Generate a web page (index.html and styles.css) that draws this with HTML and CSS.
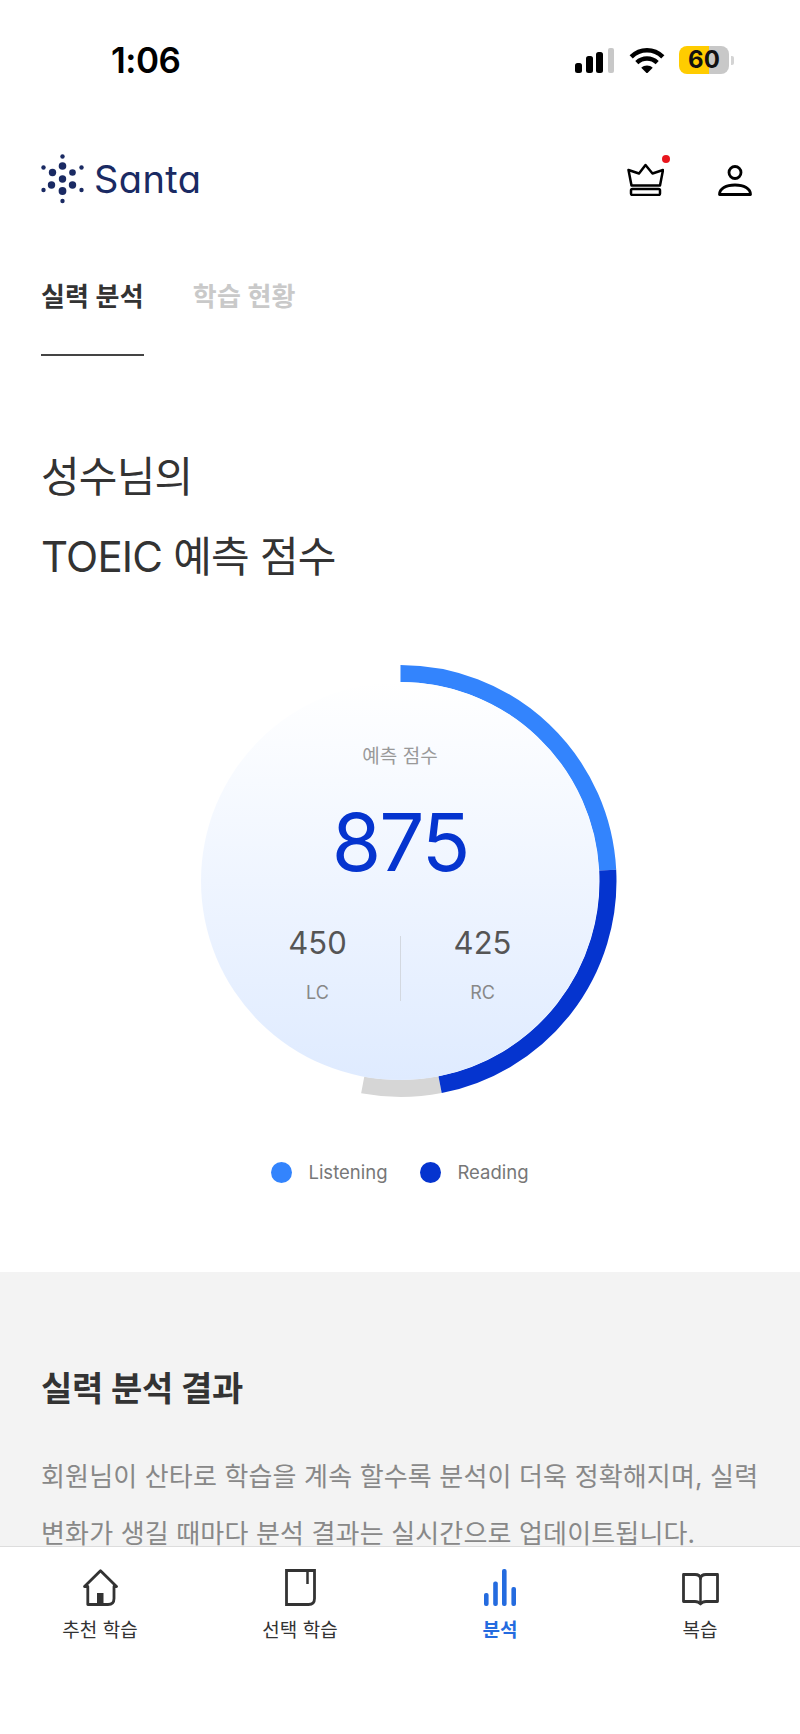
FILE: index.html
```html
<!DOCTYPE html>
<html lang="ko">
<head>
<meta charset="utf-8">
<title>Santa</title>
<link rel="stylesheet" href="styles.css">
</head>
<body>
<div class="app">
  <main class="content">
    <div class="status">
      <span class="time">1:06</span>
      <div class="status-right">
        <svg class="signal" viewBox="0 0 39 25"><rect x="0" y="15" width="7" height="10" rx="2.500" fill="#000"/><rect x="11" y="8" width="7" height="17" rx="2.500" fill="#000"/><rect x="21" y="4" width="7" height="21" rx="2.500" fill="#000"/><rect x="33" y="0" width="6" height="25" rx="2" fill="#c8c8c8"/></svg>
        <svg class="wifi" viewBox="0 0 34 25"><path d="M1.800 9.500C10.500 1 23.500 1 32.200 9.500" fill="none" stroke="#000" stroke-width="4.400"/><path d="M7.200 15C13 9.800 21 9.800 26.800 15" fill="none" stroke="#000" stroke-width="4.400"/><path d="M11.500 20C14.500 17.200 19.500 17.200 22.500 20L17 25.500Z" fill="#000"/></svg>
        <div class="battery"><span class="battery-num">60</span></div>
        <span class="battery-nub"></span>
      </div>
    </div>

    <header class="header">
      <div class="brand">
        <svg class="brand-mark" viewBox="1.800 0 42.400 50">
          <g fill="#1a2a63">
            <circle cx="23" cy="2.500" r="2.200"/><circle cx="23" cy="12" r="3.800"/><circle cx="23" cy="25" r="3.700"/><circle cx="23" cy="37" r="3.900"/><circle cx="23" cy="47" r="2.200"/>
            <circle cx="13" cy="18.500" r="3.700"/><circle cx="33" cy="18.500" r="3.300"/><circle cx="12" cy="31" r="3.700"/><circle cx="33" cy="31" r="3.700"/>
            <circle cx="4" cy="13.500" r="2.200"/><circle cx="42" cy="13.500" r="2.200"/><circle cx="4" cy="36" r="2.200"/><circle cx="42" cy="36" r="2.200"/>
          </g>
        </svg>
        <span class="brand-name">Santa</span>
      </div>
      <div class="header-actions">
        <div class="crown-wrap">
          <svg class="crown" viewBox="0 0 37 33"><path d="M1.500 7L12 10.500L18.500 2L25.500 10.500L36 7L33 22.500H4.500Z" fill="none" stroke="#000" stroke-width="2.500" stroke-linejoin="round"/><rect x="4" y="26" width="29" height="6" rx="1.500" fill="none" stroke="#000" stroke-width="2.500"/></svg>
          <span class="crown-dot"></span>
        </div>
        <svg class="person" viewBox="0 0 34 31"><circle cx="17" cy="7.500" r="6" fill="none" stroke="#000" stroke-width="2.800"/><path d="M1.500 29.500C1.500 23.500 8 20 17 20S32.500 23.500 32.500 29.500Z" fill="none" stroke="#000" stroke-width="2.800" stroke-linejoin="round"/></svg>
      </div>
    </header>

    <nav class="tabs">
      <span class="tab tab-active">실력 분석</span>
      <span class="tab">학습 현황</span>
    </nav>

    <h1 class="title">성수님의<br>TOEIC 예측 점수</h1>

    <section class="chart">
      <svg class="ring" viewBox="0 0 430 430">
        <path d="M177.700 419A207.500 207.500 0 0 0 255.100 418.700" fill="none" stroke="#d6d6d6" stroke-width="17"/>
        <path d="M215.500 7.500A207.500 207.500 0 0 1 422.700 204.100" fill="none" stroke="#3384fd" stroke-width="17"/>
        <path d="M422.700 204.100A207.500 207.500 0 0 1 255.100 418.700" fill="none" stroke="#0534cf" stroke-width="17"/>
      </svg>
      <div class="disc">
        <span class="disc-label">예측 점수</span>
        <span class="disc-score">875</span>
        <div class="split">
          <div class="split-col"><span class="split-num">450</span><span class="split-name">LC</span></div>
          <span class="split-line"></span>
          <div class="split-col"><span class="split-num">425</span><span class="split-name">RC</span></div>
        </div>
      </div>
    </section>

    <div class="legend">
      <span class="legend-item"><i class="dot dot-light"></i>Listening</span>
      <span class="legend-item"><i class="dot dot-dark"></i>Reading</span>
    </div>

    <section class="result">
      <h2 class="result-title">실력 분석 결과</h2>
      <p class="result-text">회원님이 산타로 학습을 계속 할수록 분석이 더욱 정확해지며, 실력 변화가 생길 때마다 분석 결과는 실시간으로 업데이트됩니다.</p>
    </section>
  </main>

  <nav class="bottom-nav">
    <div class="nav-item">
      <svg class="ico ico-home" viewBox="0 0 35 37"><path d="M1.500 17.500L17.500 1.800L33.500 17.500H31V29.500Q31 35.500 25 35.500H4.800V17.500Z" fill="none" stroke="#333" stroke-width="2.800" stroke-linejoin="round"/><rect x="14" y="24" width="6.500" height="11" fill="#333"/></svg>
      <span class="nav-label">추천 학습</span>
    </div>
    <div class="nav-item">
      <svg class="ico ico-note" viewBox="0 0 31 37"><path d="M1.500 1.500H29.500V29.500Q29.500 35.500 23.500 35.500H1.500Z" fill="none" stroke="#333" stroke-width="2.800"/><path d="M22.500 1.500V15" fill="none" stroke="#333" stroke-width="2.500"/></svg>
      <span class="nav-label">선택 학습</span>
    </div>
    <div class="nav-item nav-item-active">
      <svg class="ico ico-bars" viewBox="0 0 32 37"><rect x="0" y="24" width="4.600" height="13" rx="2" fill="#246bdf"/><rect x="9.200" y="12.500" width="4.600" height="24.500" rx="2" fill="#246bdf"/><rect x="18" y="0" width="4.600" height="37" rx="2" fill="#246bdf"/><rect x="27.400" y="18" width="4.600" height="19" rx="2" fill="#246bdf"/></svg>
      <span class="nav-label">분석</span>
    </div>
    <div class="nav-item">
      <svg class="ico ico-open" viewBox="0 0 37 34"><path d="M1.500 2.500H13Q18 2.500 18.500 6.500Q19 2.500 24 2.500H35.500V29.500H24Q20.500 29.500 18.500 32Q16.500 29.500 13 29.500H1.500Z" fill="none" stroke="#333" stroke-width="2.800" stroke-linejoin="round"/><path d="M18.500 6.500V31" fill="none" stroke="#333" stroke-width="2.500"/></svg>
      <span class="nav-label">복습</span>
    </div>
  </nav>
</div>
</body>
</html>
```

FILE: styles.css
```css
* { box-sizing: border-box; }
html, body { margin: 0; padding: 0; background: #fff; }
body { font-family: Inter, "Noto Sans CJK KR", sans-serif; color: #333; }
.app { width: 800px; height: 1734px; display: flex; flex-direction: column; overflow: hidden; }
.content { flex: 1 1 auto; min-height: 0; overflow: hidden; }

.status { height: 120px; display: flex; justify-content: space-between; align-items: center; padding: 0 66px 0 111px; }
.time { font-size: 35px; font-weight: 600; color: #000; letter-spacing: -0.5px; line-height: 1; }
.status-right { display: flex; align-items: center; }
.signal { width: 39px; height: 25px; margin-right: 15px; }
.wifi { width: 36px; height: 26px; margin-right: 14px; }
.battery { width: 50px; height: 28px; border-radius: 8px; background: linear-gradient(90deg, #ffcc00 0 60%, #c8c8c8 60% 100%); display: flex; align-items: center; justify-content: center; }
.battery-num { font-size: 24px; font-weight: 700; color: #111; line-height: 1; }
.battery-nub { width: 3px; height: 9px; margin-left: 2px; border-radius: 0 2px 2px 0; background: #d4d4d4; }

.header { height: 118px; display: flex; justify-content: space-between; align-items: center; padding: 0 48px 0 41px; }
.brand { display: flex; align-items: center; gap: 10px; }
.brand-mark { width: 43px; height: 50px; }
.brand-name { font-size: 38px; font-weight: 400; color: #1a2a63; line-height: 1; letter-spacing: 0.4px; font-feature-settings: "cv11"; }
.header-actions { display: flex; align-items: flex-end; gap: 54px; }
.crown-wrap { position: relative; width: 37px; height: 33px; }
.crown { display: block; width: 37px; height: 33px; }
.crown-dot { position: absolute; top: -8px; right: -5.500px; width: 8px; height: 8px; border-radius: 50%; background: #e8161d; }
.person { display: block; width: 34px; height: 31px; }

.tabs { height: 118px; display: flex; gap: 49px; padding: 0 41px; }
.tab { height: 118px; padding-top: 41px; font-size: 26px; line-height: 36px; font-weight: 700; color: #c9c9c9; letter-spacing: 0.2px; }
.tab-active { color: #333; border-bottom: 2px solid #444; }

.title { margin: 81px 0 0; padding: 0 41px; font-size: 42px; line-height: 80px; font-weight: 400; color: #333; letter-spacing: -0.8px; }

.chart { position: relative; width: 430px; height: 430px; margin: 69px auto 0; padding: 16px; }
.ring { position: absolute; inset: 0; width: 430px; height: 430px; overflow: visible; }
.disc { position: relative; width: 398px; height: 398px; border-radius: 50%; background: linear-gradient(180deg, #ffffff 0%, #dfebff 100%); display: flex; flex-direction: column; align-items: center; padding-top: 62px; }
.disc-label { font-size: 19px; line-height: 26px; color: #999; }
.disc-score { font-size: 80px; line-height: 90px; margin-top: 27px; font-weight: 400; color: #0534cf; letter-spacing: -2px; }
.split { display: flex; align-items: flex-start; margin-top: 36px; }
.split-col { width: 164px; display: flex; flex-direction: column; align-items: center; }
.split-line { width: 1px; height: 65px; margin-top: 13px; background: #d3d8e0; }
.split-num { font-size: 31px; line-height: 40px; color: #555; }
.split-name { font-size: 18px; line-height: 24px; margin-top: 18px; color: #888; }

.legend { height: 176px; display: flex; justify-content: center; gap: 33px; padding-top: 64px; }
.legend-item { display: flex; align-items: center; gap: 16px; height: 24px; font-size: 18.500px; color: #777; }
.dot { display: block; width: 21px; height: 21px; border-radius: 50%; }
.dot-light { background: #3384fd; }
.dot-dark { background: #0534cf; }

.result { background: #f3f3f3; padding: 94px 41px 0; height: 400px; }
.result-title { margin: 0; font-size: 34px; line-height: 46px; font-weight: 700; color: #333; letter-spacing: -0.2px; }
.result-text { margin: 36px 0 0; font-size: 26px; line-height: 57px; font-weight: 400; color: #888; letter-spacing: 0.15px; }

.bottom-nav { flex: 0 0 188px; display: flex; background: #fff; border-top: 1px solid #ddd; padding-top: 22px; }
.nav-item { width: 200px; display: flex; flex-direction: column; align-items: center; }
.ico { display: block; width: 35px; height: 37px; }
.ico-note { width: 31px; }
.ico-bars { width: 32px; }
.ico-open { width: 37px; height: 34px; margin-top: 3px; }
.nav-label { margin-top: 12px; font-size: 19px; line-height: 26px; color: #333; }
.nav-item-active .nav-label { color: #246bdf; font-weight: 700; }
```
